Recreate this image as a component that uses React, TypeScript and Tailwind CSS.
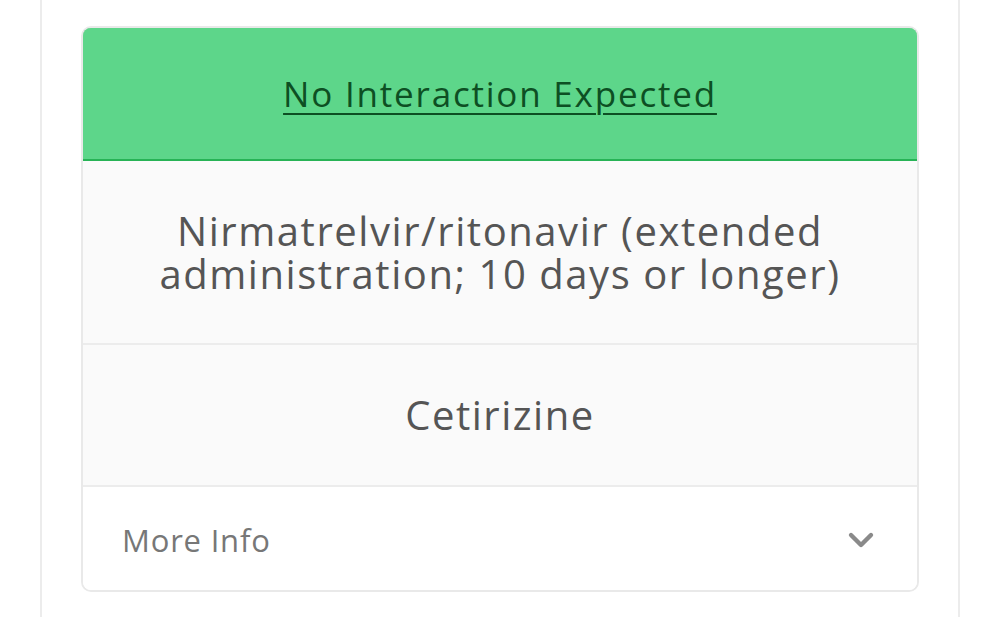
import { ChevronDown } from "lucide-react";

export default function App() {
  return (
    <div
      className="min-h-[617px] bg-white"
      style={{ fontFamily: '"Open Sans", "Liberation Sans", sans-serif' }}
    >
      <div className="mx-[40px] min-h-[617px] border-x-2 border-[#ececec] px-[39px] pt-[26px]">
        <div className="overflow-hidden rounded-[10px] border-2 border-[#e9e9e9]">
          <div className="-m-[2px] mb-0 flex h-[135px] items-center justify-center rounded-t-[10px] border-2 border-[#27b356] bg-[#5dd68a]">
            <a className="pt-[2px] text-[35px] tracking-[1.8px] text-[#0d4f23] underline decoration-2 underline-offset-[6px]">
              No Interaction Expected
            </a>
          </div>
          <div className="flex h-[184px] items-center justify-center border-b-2 border-[#ececec] bg-[#fafafa] px-4 text-center text-[40px] leading-[43px] tracking-[1.55px] text-[#555555]">
            Nirmatrelvir/ritonavir (extended
            <br />
            administration; 10 days or longer)
          </div>
          <div className="flex h-[142px] items-center justify-center border-b-2 border-[#ececec] bg-[#fafafa] text-[40px] tracking-[1.5px] text-[#555555]">
            Cetirizine
          </div>
          <div className="flex h-[103px] items-center justify-between bg-white pl-[39px] pr-[36px] pt-[3px]">
            <span className="text-[31px] tracking-[0.8px] text-[#777777]">More Info</span>
            <ChevronDown className="h-10 w-10 text-[#8a8a8a]" strokeWidth={2.6} />
          </div>
        </div>
      </div>
    </div>
  );
}
